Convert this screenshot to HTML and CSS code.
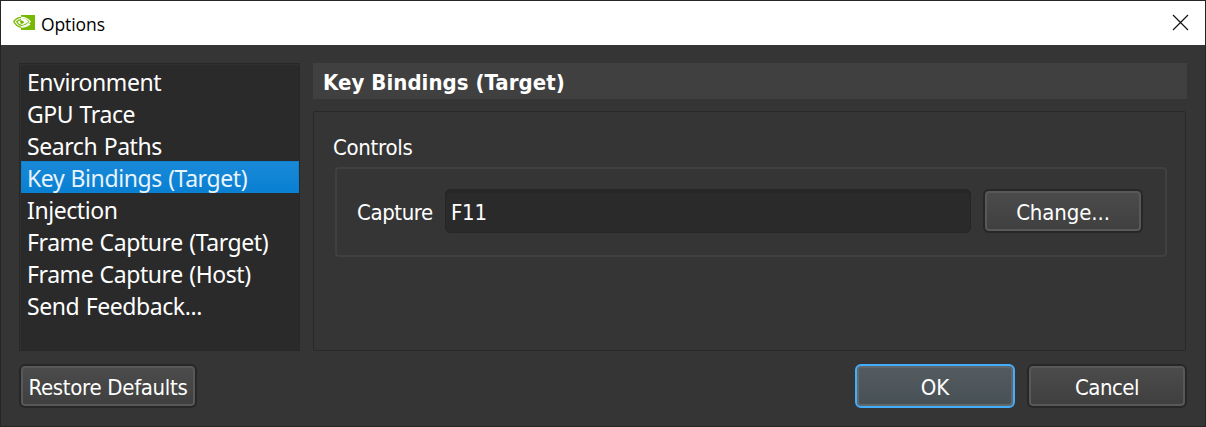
FILE: index.html
```
<!DOCTYPE html>
<html lang="en">
<head>
<meta charset="utf-8">
<title>Options</title>
<link rel="stylesheet" href="styles.css">
</head>
<body>
<div class="window">
  <header class="titlebar">
    <svg class="logo" width="22" height="15" viewBox="0 0 22 15">
      <path fill="#76b900" d="M8 0H22V15H8V12.8C11 13 14 12.3 17.500 9.600L16.200 8.400C13.500 10.600 11 11.600 8 11.300V10C10.500 10 13.500 8.500 15.500 6.500C13.500 4 11 3 8 3Z"/>
      <g fill="none" stroke="#76b900" stroke-width="1.300">
        <path d="M9 2.400C5.500 2.200 2.500 4.200 .8 6.500C2.500 10 5 11.800 8.500 12.300"/>
        <path d="M8.500 4.600C6.500 4.600 4.800 5.600 3.700 6.800C4.800 8.900 6.300 9.900 8.500 10.300"/>
      </g>
      <path fill="none" stroke="#fff" stroke-width="1.200" d="M8 2.300C12 2.100 15 3.800 17.300 6.700C14.500 9.800 11.500 11.700 8 11.500"/>
      <path fill="none" stroke="#fff" stroke-width="1" d="M8 4.500C10.500 4.300 12 5.500 13.200 6.900C12 8.300 10.500 9.300 8.600 9"/>
      <path fill="#76b900" d="M7 6C9 5 10.500 6 11 7.200C10 8.700 8.600 9.200 7.500 8.600Z"/>
    </svg>
    <h1 class="title">Options</h1>
    <svg class="close" width="17" height="17" viewBox="0 0 17 17"><path d="M1 1L16 16M16 1L1 16"/></svg>
  </header>
  <main class="content">
    <ul class="nav">
      <li class="item">Environment</li>
      <li class="item">GPU Trace</li>
      <li class="item">Search Paths</li>
      <li class="item selected">Key Bindings (Target)</li>
      <li class="item">Injection</li>
      <li class="item">Frame Capture (Target)</li>
      <li class="item">Frame Capture (Host)</li>
      <li class="item">Send Feedback...</li>
    </ul>
    <section class="page">
      <h2 class="heading">Key Bindings (Target)</h2>
      <div class="panel">
        <div class="group-title">Controls</div>
        <div class="group">
          <label class="label" for="capture">Capture</label>
          <div class="input" id="capture">F11</div>
          <button class="button change"><span>Change...</span></button>
        </div>
      </div>
    </section>
  </main>
  <footer class="footer">
    <button class="button restore"><span>Restore Defaults</span></button>
    <button class="button ok"><span>OK</span></button>
    <button class="button cancel"><span>Cancel</span></button>
  </footer>
</div>
</body>
</html>
```
FILE: styles.css
```
* { box-sizing: border-box; }
body { margin: 0; overflow: hidden; }
.window {
  width: 1206px; height: 427px;
  display: flex; flex-direction: column;
  border: 1px solid #262626;
  background: #353535; color: #fff;
  font-family: "DejaVu Sans Condensed", "DejaVu Sans", sans-serif;
  font-stretch: condensed;
  font-size: 22px;
}
.titlebar {
  height: 44px; flex: none; display: flex; align-items: center;
  padding: 0 16px 0 12px; background: #fff; color: #000;
}
.logo { margin-top: -1px; }
.title { margin: 1px 0 0 6px; font: 400 17.5px "Open Sans", sans-serif; letter-spacing: -.1px; }
.close { margin-left: auto; margin-top: -1px; fill: none; stroke: #111; stroke-width: 1.2; }
.content { display: flex; gap: 13px; padding: 18px 18px 0; }
.nav {
  width: 281px; height: 288px; margin: 0; padding: 1px 0 0 1px; list-style: none;
  border: 1px solid #282828; background: #2a2a2a;
  box-shadow: inset 1px 1px #303030;
}
.item {
  height: 32px; width: 278px; padding-left: 6px; white-space: nowrap;
  font: 400 23px/34px "Noto Sans", sans-serif; letter-spacing: -.42px; word-spacing: .8px;
}
.selected {
  color: #e8f3fc; background: linear-gradient(#1a8ad8, #087fd2);
  box-shadow: inset 0 0 0 1px #0d80d0; border-radius: 1px;
}
.page { width: 874px; }
.heading {
  margin: 0; height: 36px; padding-left: 10px; background: #404040;
  font-size: 22px; font-weight: 700; line-height: 39px; letter-spacing: .04px;
}
.panel {
  width: 873px; height: 240px; margin-top: 12px; padding: 20px 18px 0 19px;
  border: 1px solid #292929; border-radius: 2px;
}
.group-title { height: 35px; line-height: 31px; letter-spacing: -.3px; }
.group {
  width: 832px; height: 90px; margin-left: 2px; padding: 0 22px 2px 20px;
  display: flex; align-items: center;
  border: 2px solid #404040; border-radius: 4px;
}
.label { width: 88px; line-height: 28px; padding-top: 4px; letter-spacing: -.4px; }
.input {
  width: 526px; height: 44px; padding-left: 5px; line-height: 46px; letter-spacing: -.3px;
  border: 1px solid #262626; border-radius: 5px; background: #2a2a2a;
  box-shadow: inset 0 3px #272727;
}
.button {
  height: 44px; padding: 3px 0 0; flex: none;
  border: 2px solid #272727; border-radius: 6px;
  background: linear-gradient(#4c4c4c, #3f3f3f);
  box-shadow: inset 0 0 0 2px #585858;
  color: #fff; font: inherit; line-height: 37px; white-space: nowrap;
}
.change { width: 160px; margin-left: 12px; letter-spacing: -.1px; }
.footer { display: flex; padding: 13px 18px 0; }
.restore { width: 178px; letter-spacing: -.3px; }
.ok {
  width: 160px; margin-left: auto; border-color: #43aefc;
  background: linear-gradient(#545c60, #475055); box-shadow: inset 0 0 0 2px #60686b;
}
.cancel { width: 160px; margin-left: 12px; letter-spacing: -.5px; }
```
